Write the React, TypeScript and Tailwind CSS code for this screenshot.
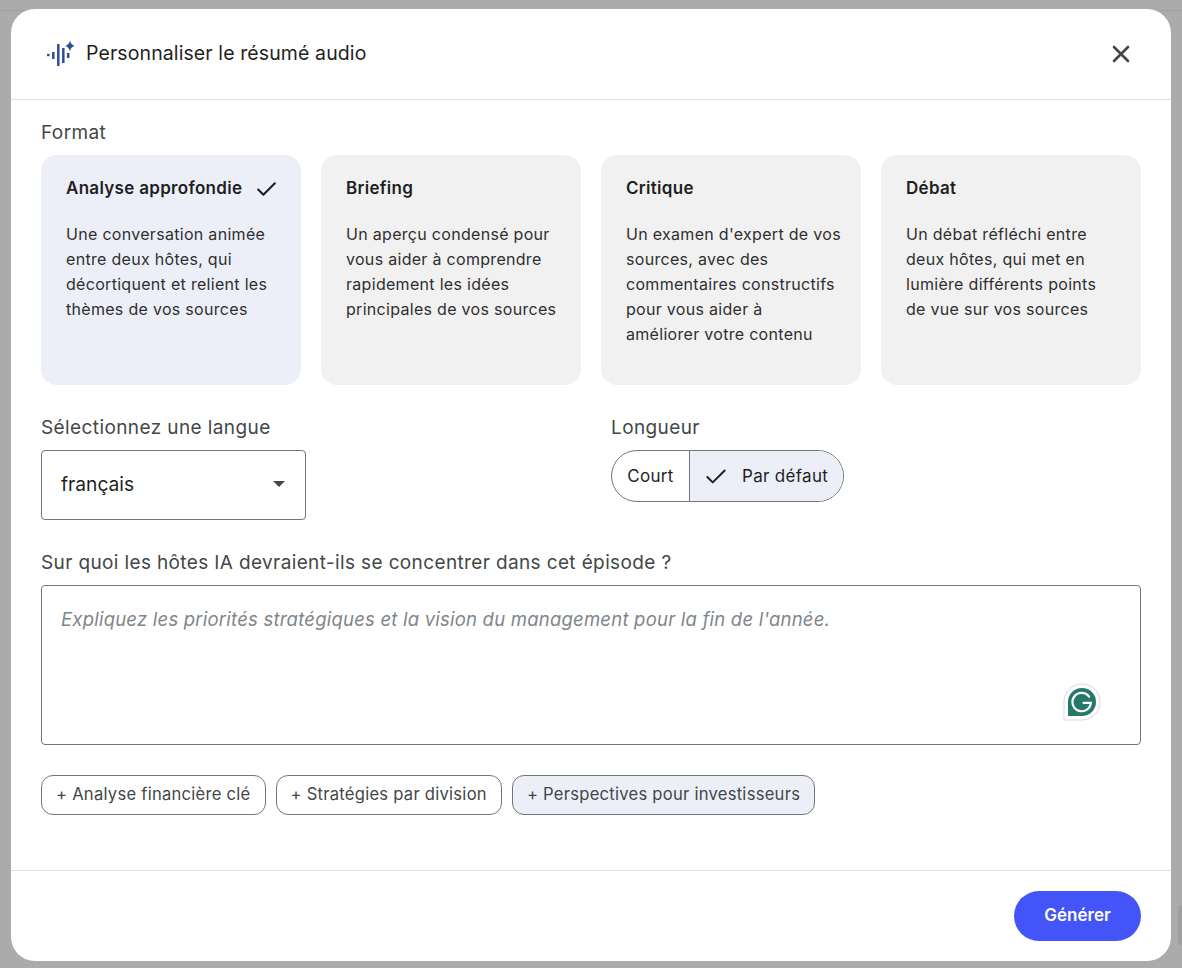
import { X, Check } from 'lucide-react'

const formats = [
  {
    title: 'Analyse approfondie',
    lines: ['Une conversation animée', 'entre deux hôtes, qui', 'décortiquent et relient les', 'thèmes de vos sources'],
    selected: true,
  },
  {
    title: 'Briefing',
    lines: ['Un aperçu condensé pour', 'vous aider à comprendre', 'rapidement les idées', 'principales de vos sources'],
  },
  {
    title: 'Critique',
    lines: ["Un examen d'expert de vos", 'sources, avec des', 'commentaires constructifs', 'pour vous aider à', 'améliorer votre contenu'],
  },
  {
    title: 'Débat',
    lines: ['Un débat réfléchi entre', 'deux hôtes, qui met en', 'lumière différents points', 'de vue sur vos sources'],
  },
]

function AudioSparkIcon() {
  return (
    <svg width="30" height="28" viewBox="0 0 30 28" fill="none">
      <g stroke="#2f4f8f" strokeWidth="2.500">
        <path d="M4.300 13.800v2.400" />
        <path d="M9.300 12v7" />
        <path d="M14.300 4v22" />
        <path d="M19.300 8v15" />
        <path d="M24.200 13v5" />
      </g>
      <path d="M26 0.500c.7 3.200 2 4.600 5 5.500-3 .9-4.300 2.300-5 5.500-.7-3.200-2-4.600-5-5.500 3-.9 4.300-2.300 5-5.500z" fill="#2f4f8f" />
    </svg>
  )
}

function GrammarlyIcon() {
  return (
    <svg width="38" height="38" viewBox="0 0 38 38" fill="none">
      <path d="M1 37V19a18 18 0 1 1 18 18H1z" fill="#fff" stroke="#d9d9d9" strokeWidth="1" />
      <path d="M5 33V19a14 14 0 1 1 14 14H5z" fill="#26786a" />
      <path
        d="M26 13.500a9.200 9.200 0 1 0 1.800 6.300h-7.300"
        stroke="#fff"
        strokeWidth="2.200"
        strokeLinecap="round"
        fill="none"
      />
    </svg>
  )
}

function FormatCard({ title, lines, selected }: { title: string; lines: string[]; selected?: boolean }) {
  return (
    <div className={`h-[230px] rounded-2xl pl-[25px] pt-[22px] ${selected ? 'bg-[#edeff8]' : 'bg-[#f1f1f1]'}`}>
      <div className="flex h-6 items-center gap-[12px] text-[17px] font-semibold tracking-[0.3px] text-[#1f1f1f]">
        {title}
        {selected && <Check size={25} strokeWidth={2} className="text-[#1f1f1f]" />}
      </div>
      <div className="mt-[21px] text-[16px] leading-[25px] tracking-[0.3px] text-[#2f2f2f]">
        {lines.map((line) => (
          <div key={line}>{line}</div>
        ))}
      </div>
    </div>
  )
}

function Chip({ label, active }: { label: string; active?: boolean }) {
  return (
    <button
      className={`h-10 rounded-xl border border-[#757575] px-[14px] pb-px text-[16.600px] tracking-[0.25px] text-[#444746] ${active ? 'bg-[#edeff8]' : 'bg-white'}`}
    >
      {label}
    </button>
  )
}

export default function App() {
  return (
    <div
      className="relative h-[968px] w-[1182px] overflow-hidden bg-[#ababab] pl-[11px] pt-[9px]"
      style={{ fontFamily: 'Inter, "Noto Sans", sans-serif' }}
    >
      {/* dimmed page behind the dialog */}
      <div className="absolute inset-x-0 top-[10px] h-px bg-[#a0a0a0]" />
      <div className="absolute right-0 top-[905px] h-[40px] w-[4px] rounded-l bg-[#9f9f9f]" />

      <div className="relative flex h-[952px] w-[1160px] flex-col rounded-3xl bg-white">
        {/* Header */}
        <div className="flex h-[91px] shrink-0 items-center justify-between border-b border-[#e0e0e0] pl-[33px] pr-[36px]">
          <div className="flex items-center gap-[12px]">
            <AudioSparkIcon />
            <h1 className="text-[19.500px] font-normal tracking-[0.1px] text-[#1f1f1f]">Personnaliser le résumé audio</h1>
          </div>
          <X size={28} strokeWidth={2.300} className="text-[#444746]" />
        </div>

        {/* Body */}
        <div className="flex-1 px-[30px]">
          <div className="mt-[21px] text-[19px] leading-6 tracking-[0.4px] text-[#444746]">Format</div>
          <div className="mt-[10px] grid grid-cols-4 gap-5">
            {formats.map((f) => (
              <FormatCard key={f.title} {...f} />
            ))}
          </div>

          <div className="mt-[31px] flex">
            <div className="w-[570px]">
              <div className="text-[19px] leading-6 tracking-[0.4px] text-[#444746]">Sélectionnez une langue</div>
              <div className="mt-[10px] flex h-[70px] w-[265px] items-center justify-between rounded border border-[#757575] pb-[2px] pl-[19px] pr-[20px] text-[19.200px] text-[#1f1f1f]">
                français
                <span className="h-0 w-0 border-x-[6.500px] border-t-[6.500px] border-x-transparent border-t-[#444746]" />
              </div>
            </div>
            <div>
              <div className="text-[19px] leading-6 tracking-[0.4px] text-[#444746]">Longueur</div>
              <div className="mt-[10px] flex h-[52px] w-[233px] overflow-hidden rounded-full border border-[#757575] text-[17px] tracking-[0.3px] text-[#1f1f1f]">
                <div className="flex w-[78px] items-center justify-center border-r border-[#757575] pt-px">Court</div>
                <div className="flex flex-1 items-center gap-[13px] bg-[#edeff8] pl-[13px] pt-px">
                  <Check size={26} strokeWidth={1.800} />
                  Par défaut
                </div>
              </div>
            </div>
          </div>

          <div className="mt-[31px] text-[19px] leading-6 tracking-[0.37px] text-[#444746]">
            Sur quoi les hôtes IA devraient-ils se concentrer dans cet épisode ?
          </div>
          <div className="relative mt-[10px] h-[160px] rounded border border-[#757575] px-[19px] pt-[21px] text-[18.500px] italic leading-6 tracking-[0.22px] text-[#80868b]">
            Expliquez les priorités stratégiques et la vision du management pour la fin de l'année.
            <div className="absolute bottom-[23px] right-[39px]">
              <GrammarlyIcon />
            </div>
          </div>

          <div className="mt-[30px] flex gap-[10px]">
            <Chip label="+ Analyse financière clé" />
            <Chip label="+ Stratégies par division" />
            <Chip label="+ Perspectives pour investisseurs" active />
          </div>
        </div>

        {/* Footer */}
        <div className="flex h-[91px] shrink-0 items-center justify-end border-t border-[#e0e0e0] pr-[30px]">
          <button className="h-[50px] w-[127px] rounded-full bg-[#4355f9] text-[17px] font-semibold text-white">
            Générer
          </button>
        </div>
      </div>
    </div>
  )
}
